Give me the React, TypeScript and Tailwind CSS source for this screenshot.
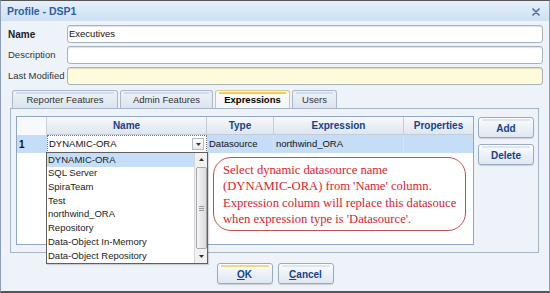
import React from "react";

const ui = { fontFamily: '"Liberation Sans", Arial, sans-serif' };
const serif = { fontFamily: '"Liberation Serif", "Times New Roman", serif' };

function Input({ yellow }: { yellow?: boolean }) {
  return (
    <div
      className={`flex-1 h-[18px] rounded-[3px] border border-[#a9b1bb] shadow-[inset_0_1px_1px_rgba(0,0,0,0.12)] ${
        yellow ? "bg-[#fdfbdc]" : "bg-white"
      }`}
    />
  );
}

function Tab({ label, w, active }: { label: string; w: string; active?: boolean }) {
  return (
    <div
      className={`${w} h-[18px] rounded-t-[3px] border border-b-0 flex items-center justify-center text-[9.5px] relative ${
        active
          ? "bg-gradient-to-b from-[#fffdf2] to-[#f3f6fa] border-[#d9c48a] font-bold text-black"
          : "bg-gradient-to-b from-[#eef2f8] to-[#dce4ee] border-[#a9b8cb] text-[#333]"
      }`}
    >
      <div
        className={`absolute left-[3px] right-[3px] top-[1px] h-[2px] ${
          active ? "bg-[#f4c862]" : "bg-[#d0dcec]"
        }`}
      />
      <span className="mt-[2px]">{label}</span>
    </div>
  );
}

function Btn({ label, w, accent }: { label: React.ReactNode; w: string; accent: string }) {
  return (
    <div
      className={`${w} relative rounded-[3px] border border-[#9aaac0] bg-gradient-to-b from-[#fbfcfe] to-[#dfe7f1] flex items-center justify-center text-[10px] font-bold text-[#15428b] shadow-[0_1px_1px_rgba(0,0,0,0.15)]`}
    >
      <div className={`absolute left-[3px] right-[3px] top-[1px] h-[2px] ${accent}`} />
      <span className="mt-[2px]">{label}</span>
    </div>
  );
}

const items = [
  "DYNAMIC-ORA",
  "SQL Server",
  "SpiraTeam",
  "Test",
  "northwind_ORA",
  "Repository",
  "Data-Object In-Memory",
  "Data-Object Repository",
];

export default function App() {
  return (
    <div
      style={ui}
      className="w-[550px] h-[293px] box-border border border-[#8e9db3] border-t-[#555] border-b-[#555] border-b-2 bg-[#eef3fa] flex flex-col text-[#222]"
    >
      {/* Title bar */}
      <div className="h-[20px] shrink-0 bg-gradient-to-b from-[#e6effb] to-[#cfdff4] flex items-center justify-between pl-[6px] pr-[9px]">
        <span className="text-[10.5px] font-bold text-[#2b5fa8] mt-[2px]">Profile - DSP1</span>
        <svg width="8" height="8" viewBox="0 0 8 8" className="mt-[2px]">
          <path d="M1 1 L7 7 M7 1 L1 7" stroke="#5a7194" strokeWidth="1.7" strokeLinecap="round" />
        </svg>
      </div>

      {/* Form rows */}
      <div className="mt-[4px] flex flex-col gap-[3px] pl-[7px] pr-[6px]">
        <div className="flex items-center">
          <span className="w-[59px] text-[10px] font-bold text-[#222]">Name</span>
          <div className="flex-1 h-[18px] rounded-[3px] border border-[#a9b1bb] bg-white shadow-[inset_0_1px_1px_rgba(0,0,0,0.12)] flex items-center pl-[1px] text-[9.5px] text-[#111]">
            Executives
          </div>
        </div>
        <div className="flex items-center">
          <span className="w-[59px] text-[9.5px] text-[#333]">Description</span>
          <Input />
        </div>
        <div className="flex items-center">
          <span className="w-[59px] text-[9.5px] text-[#333]">Last Modified</span>
          <Input yellow />
        </div>
      </div>

      {/* Tabs */}
      <div className="mt-[5px] flex gap-[2px] pl-[11px]">
        <Tab label="Reporter Features" w="w-[106px]" />
        <Tab label="Admin Features" w="w-[93px]" />
        <Tab label="Expressions" w="w-[75px]" active />
        <Tab label="Users" w="w-[45px]" />
      </div>

      {/* Panel */}
      <div className="ml-[9px] w-[529px] h-[145px] shrink-0 box-border border border-[#a6b4c7] flex pl-[5px] pt-[7px]">
        {/* Grid */}
        <div className="relative w-[458px] h-[129px] box-border border border-[#8fa6c4] bg-white flex flex-col">
          {/* header */}
          <div className="h-[18px] flex text-[10px] font-bold text-[#15428b]">
            <div className="w-[30px] bg-[#f7f9fc] border-r border-[#c9d3df]" />
            {[
              ["Name", "w-[160px]"],
              ["Type", "w-[67px]"],
              ["Expression", "w-[130px]"],
              ["Properties", "w-[69px]"],
            ].map(([t, w]) => (
              <div
                key={t}
                className={`${w} bg-gradient-to-b from-[#f6f8fb] to-[#dfe6ef] border-r border-b border-[#c3cdda] flex items-center justify-center last:border-r-0`}
              >
                {t}
              </div>
            ))}
          </div>
          {/* row 1 */}
          <div className="h-[18px] flex bg-[#c6ddf8] text-[9.5px] text-[#111]">
            <div className="w-[30px] flex items-center pl-[2px] font-bold text-[10px]">1</div>
            <div className="w-[160px] border border-dotted border-[#777] bg-white flex items-center justify-between pl-[1px] pr-[2px]">
              <span>DYNAMIC-ORA</span>
              <div className="w-[12px] h-[12px] border border-[#b4bcc7] bg-gradient-to-b from-white to-[#e6e9ee] flex items-center justify-center">
                <svg width="5" height="3" viewBox="0 0 5 3">
                  <path d="M0 0 H5 L2.5 3 Z" fill="#333" />
                </svg>
              </div>
            </div>
            <div className="w-[67px] border-r border-[#d8e4f2] flex items-center pl-[2px]">Datasource</div>
            <div className="w-[130px] border-r border-[#d8e4f2] flex items-center pl-[2px]">northwind_ORA</div>
            <div className="w-[69px]" />
          </div>

          {/* Callout */}
          <div
            style={serif}
            className="ml-[196px] mt-[4px] w-[253px] h-[74px] box-border rounded-[18px] border-[1.5px] border-[#c0504d] pl-[9px] pt-[4px] text-[12.6px] leading-[16.3px] text-[#d8232e]"
          >
            Select dynamic datasource name
            <br />
            (DYNAMIC-ORA) from 'Name' column.
            <br />
            Expression column will replace this datasouce
            <br />
            when expression type is 'Datasource'.
          </div>

          {/* Dropdown list */}
          <div className="absolute left-[29px] top-[35px] w-[162px] h-[112px] box-border border border-[#5f5f5f] bg-white flex text-[9.5px] text-[#222] shadow-[1px_1px_1px_rgba(0,0,0,0.15)]">
            <div className="flex-1 flex flex-col">
              {items.map((it, i) => (
                <div
                  key={it}
                  className={`h-[13.7px] flex items-center pl-[1px] ${i === 0 ? "bg-[#c6ddf8]" : ""}`}
                >
                  {it}
                </div>
              ))}
            </div>
            <div className="w-[13px] border-l border-[#d6d6d6] bg-[#f1f1f1] flex flex-col items-center">
              <div className="h-[13px] w-full flex items-center justify-center">
                <svg width="5" height="3" viewBox="0 0 5 3">
                  <path d="M0 3 H5 L2.5 0 Z" fill="#333" />
                </svg>
              </div>
              <div className="flex-1 w-[11px] my-[1px] rounded-[2px] border border-[#a4a8ae] bg-gradient-to-r from-[#f5f5f5] to-[#dcdcdc] flex flex-col items-center justify-center gap-[1px]">
                <div className="w-[5px] h-px bg-[#999]" />
                <div className="w-[5px] h-px bg-[#999]" />
                <div className="w-[5px] h-px bg-[#999]" />
              </div>
              <div className="h-[13px] w-full flex items-center justify-center">
                <svg width="5" height="3" viewBox="0 0 5 3">
                  <path d="M0 0 H5 L2.5 3 Z" fill="#333" />
                </svg>
              </div>
            </div>
          </div>
        </div>

        {/* Side buttons */}
        <div className="ml-[4px] pt-[1px] flex flex-col gap-[6px]">
          <Btn label="Add" w="w-[56px] h-[21px]" accent="bg-[#dde7f4]" />
          <Btn label="Delete" w="w-[56px] h-[21px]" accent="bg-[#dde7f4]" />
        </div>
      </div>

      {/* Bottom buttons */}
      <div className="mt-[10px] flex justify-center gap-[5px]">
        <Btn
          label={
            <>
              <span className="underline">O</span>K
            </>
          }
          w="w-[56px] h-[21px]"
          accent="bg-[#f6d77a]"
        />
        <Btn
          label={
            <>
              <span className="underline">C</span>ancel
            </>
          }
          w="w-[56px] h-[21px]"
          accent="bg-[#dde7f4]"
        />
      </div>
    </div>
  );
}
